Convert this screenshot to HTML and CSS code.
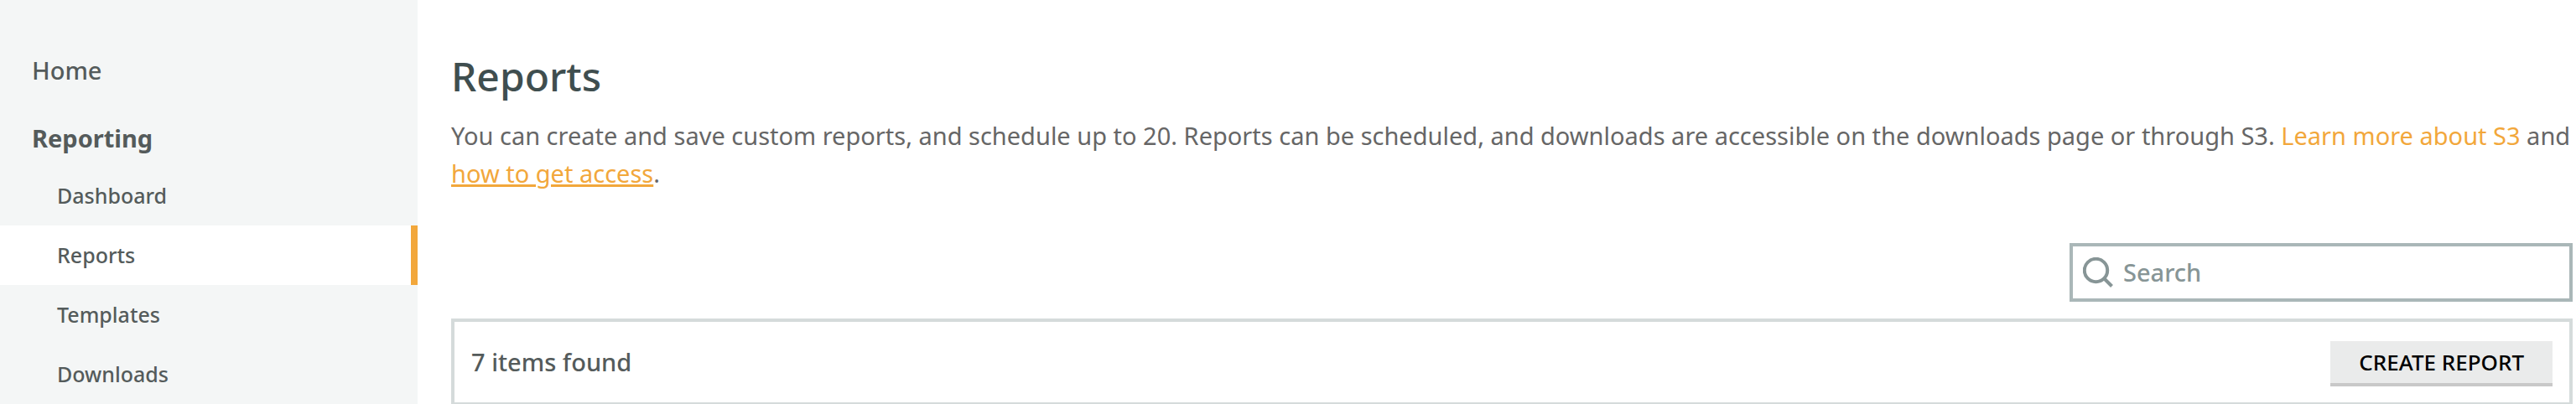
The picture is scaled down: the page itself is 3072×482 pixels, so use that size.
FILE: index.html
```html
<!DOCTYPE html>
<html lang="en">
<head>
  <meta charset="UTF-8">
  <meta name="viewport" content="width=device-width, initial-scale=1">
  <title>Reports</title>
  <link rel="stylesheet" href="styles.css">
</head>
<body>
  <div class="layout">
    <!-- Side navigation -->
    <nav class="sidebar">
      <a href="#" class="nav-link">Home</a>
      <a href="#" class="nav-link nav-section">Reporting</a>
      <ul class="sub-nav">
        <li><a href="#">Dashboard</a></li>
        <li><a href="#" class="active" aria-current="page">Reports</a></li>
        <li><a href="#">Templates</a></li>
        <li><a href="#">Downloads</a></li>
      </ul>
    </nav>

    <main class="content">
      <h1>Reports</h1>
      <p class="description">You can create and save custom reports, and schedule up to 20. Reports can be scheduled, and downloads are accessible on the downloads page or through S3. <a href="#">Learn more about S3</a> and <a href="#" class="underlined">how to get access</a>.</p>

      <label class="search">
        <svg class="search-icon" viewBox="0 0 36 36" fill="none" stroke="currentColor" stroke-width="4" aria-hidden="true">
          <circle cx="15.5" cy="15.5" r="13.7"/>
          <path d="M25 25l9.5 9.5"/>
        </svg>
        <input type="text" placeholder="Search" aria-label="Search">
      </label>

      <!-- Report list header -->
      <section class="panel">
        <span>7 items found</span>
        <button type="button">Create report</button>
      </section>
    </main>
  </div>
</body>
</html>
```
FILE: styles.css
```css
* {
  box-sizing: border-box;
}
body {
  margin: 0;
  font-family: "Noto Sans", "Open Sans", sans-serif;
  font-size: 29px;
  font-weight: 500;
  line-height: 44px;
  color: #545b5b;
  background: #fff;
}
a {
  text-decoration: none;
}
.layout {
  display: flex;
  height: 100vh;
  overflow: hidden;
}
/* Sidebar */
.sidebar {
  flex: 0 0 498px;
  padding-top: 44px;
  background: #f4f6f6;
}
.nav-link {
  display: block;
  padding: 18px 38px;
  color: #545b5b;
}
.nav-section {
  padding: 19px 38px 11px;
  font-weight: 700;
}
.sub-nav {
  margin: 0;
  padding: 0;
  list-style: none;
}
.sub-nav a {
  display: block;
  height: 71px;
  padding-left: 68px;
  font-size: 25px;
  line-height: 71px;
  color: #545b5b;
}
.sub-nav .active {
  background: #fff;
  border-right: 8px solid #f2a73b;
}
/* Main content */
.content {
  flex: 1;
  min-width: 0;
  padding: 59px 4px 0 40px;
}
h1 {
  margin: 0 0 16px;
  font-size: 48px;
  line-height: 64px;
  font-weight: 500;
  color: #3f4e4f;
}
.description {
  margin: 0 0 61px;
  font-weight: 400;
  line-height: 45px;
  color: #666;
}
.description a {
  color: #f2a73b;
}
.description .underlined {
  text-decoration: underline;
  text-decoration-thickness: 3px;
}
.search {
  display: flex;
  align-items: center;
  width: 600px;
  height: 70px;
  margin: 0 0 20px auto;
  padding-left: 12px;
  border: 4px solid #aab7b8;
  color: #879596;
}
.search-icon {
  width: 36px;
  height: 36px;
}
.search input {
  flex: 1;
  min-width: 0;
  padding: 0 12px;
  border: 0;
  outline: 0;
  font: inherit;
  background: none;
}
.search input::placeholder {
  color: #879596;
  opacity: 1;
}
.panel {
  display: flex;
  align-items: center;
  justify-content: space-between;
  height: 104px;
  padding: 0 20px;
  border: 4px solid #d5dbdb;
}
.panel button {
  height: 54px;
  margin-top: 4px;
  padding: 0 34px;
  border: 0;
  border-bottom: 4px solid #c8c8c8;
  background: #eaebeb;
  font: inherit;
  font-size: 26px;
  text-transform: uppercase;
  color: #000;
}
```
